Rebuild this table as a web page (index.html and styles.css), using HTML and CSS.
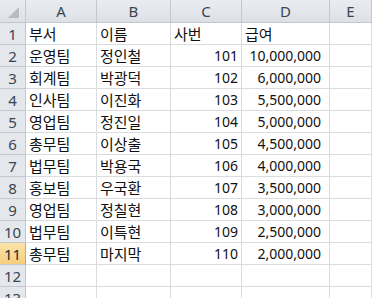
FILE: index.html
```html
<!DOCTYPE html>
<html lang="ko">
<head>
<meta charset="utf-8">
<link rel="stylesheet" href="styles.css">
</head>
<body>
<div class="sheet">
  <div class="hd corner"><svg class="tri" width="12" height="12" viewBox="0 0 12 12"><polygon points="0,11 11,11 11,0" fill="#b7bcc2"/></svg></div>
  <div class="hd col">A</div><div class="hd col">B</div><div class="hd col">C</div><div class="hd col">D</div><div class="hd col">E</div>

  <div class="hd row">1</div><div class="c">부서</div><div class="c">이름</div><div class="c">사번</div><div class="c">급여</div><div class="c"></div>
  <div class="hd row">2</div><div class="c">운영팀</div><div class="c">정인철</div><div class="c n">101</div><div class="c m">10,000,000</div><div class="c"></div>
  <div class="hd row">3</div><div class="c">회계팀</div><div class="c">박광덕</div><div class="c n">102</div><div class="c m">6,000,000</div><div class="c"></div>
  <div class="hd row">4</div><div class="c">인사팀</div><div class="c">이진화</div><div class="c n">103</div><div class="c m">5,500,000</div><div class="c"></div>
  <div class="hd row">5</div><div class="c">영업팀</div><div class="c">정진일</div><div class="c n">104</div><div class="c m">5,000,000</div><div class="c"></div>
  <div class="hd row">6</div><div class="c">총무팀</div><div class="c">이상출</div><div class="c n">105</div><div class="c m">4,500,000</div><div class="c"></div>
  <div class="hd row">7</div><div class="c">법무팀</div><div class="c">박용국</div><div class="c n">106</div><div class="c m">4,000,000</div><div class="c"></div>
  <div class="hd row">8</div><div class="c">홍보팀</div><div class="c">우국환</div><div class="c n">107</div><div class="c m">3,500,000</div><div class="c"></div>
  <div class="hd row">9</div><div class="c">영업팀</div><div class="c">정칠현</div><div class="c n">108</div><div class="c m">3,000,000</div><div class="c"></div>
  <div class="hd row">10</div><div class="c">법무팀</div><div class="c">이특현</div><div class="c n">109</div><div class="c m">2,500,000</div><div class="c"></div>
  <div class="hd row sel">11</div><div class="c">총무팀</div><div class="c">마지막</div><div class="c n">110</div><div class="c m">2,000,000</div><div class="c"></div>
  <div class="hd row">12</div><div class="c"></div><div class="c"></div><div class="c"></div><div class="c"></div><div class="c"></div>
  <div class="hd row">13</div><div class="c"></div><div class="c"></div><div class="c"></div><div class="c"></div><div class="c"></div>
</div>
</body>
</html>
```

FILE: styles.css
```css
html, body {
  margin: 0;
  padding: 0;
  background: #ffffff;
  overflow: hidden;
}
.sheet {
  display: grid;
  grid-template-columns: 26px 71px 74px 71px 88px 1fr;
  grid-template-rows: 23px;
  grid-auto-rows: 22px;
  width: 372px;
  height: 298px;
  overflow: hidden;
}
.hd {
  box-sizing: border-box;
  background: linear-gradient(#e9ecf0, #dde1e6);
  border-right: 1px solid #c3c8ce;
  border-bottom: 1px solid #c3c8ce;
  color: #3a4552;
  font-family: "Noto Sans", "Liberation Sans", sans-serif;
  font-size: 15px;
  display: flex;
  align-items: center;
  justify-content: center;
}
.corner {
  position: relative;
  align-items: flex-end;
  justify-content: flex-end;
  padding: 0 5px 3px 0;
}
.tri {
  display: block;
}
.row {
  background: #e4e7eb;
  color: #3a4552;
}
.row.sel {
  background: linear-gradient(#fbe3a8, #f6cf7d);
  color: #1e2a36;
  border-right-color: #c9a75c;
}
.c {
  box-sizing: border-box;
  border-right: 1px solid #dadcdf;
  border-bottom: 1px solid #dadcdf;
  font-family: "Noto Sans CJK KR", "Noto Sans", sans-serif;
  font-size: 15px;
  color: #111;
  display: flex;
  align-items: center;
  padding: 0 3px;
  white-space: nowrap;
  overflow: hidden;
}
.n {
  justify-content: flex-end;
  font-family: "Noto Sans", "Liberation Sans", sans-serif;
  font-size: 14px;
}
.m {
  justify-content: flex-end;
  padding-right: 8px;
  font-family: "Noto Sans", "Liberation Sans", sans-serif;
  font-size: 14px;
}
```
